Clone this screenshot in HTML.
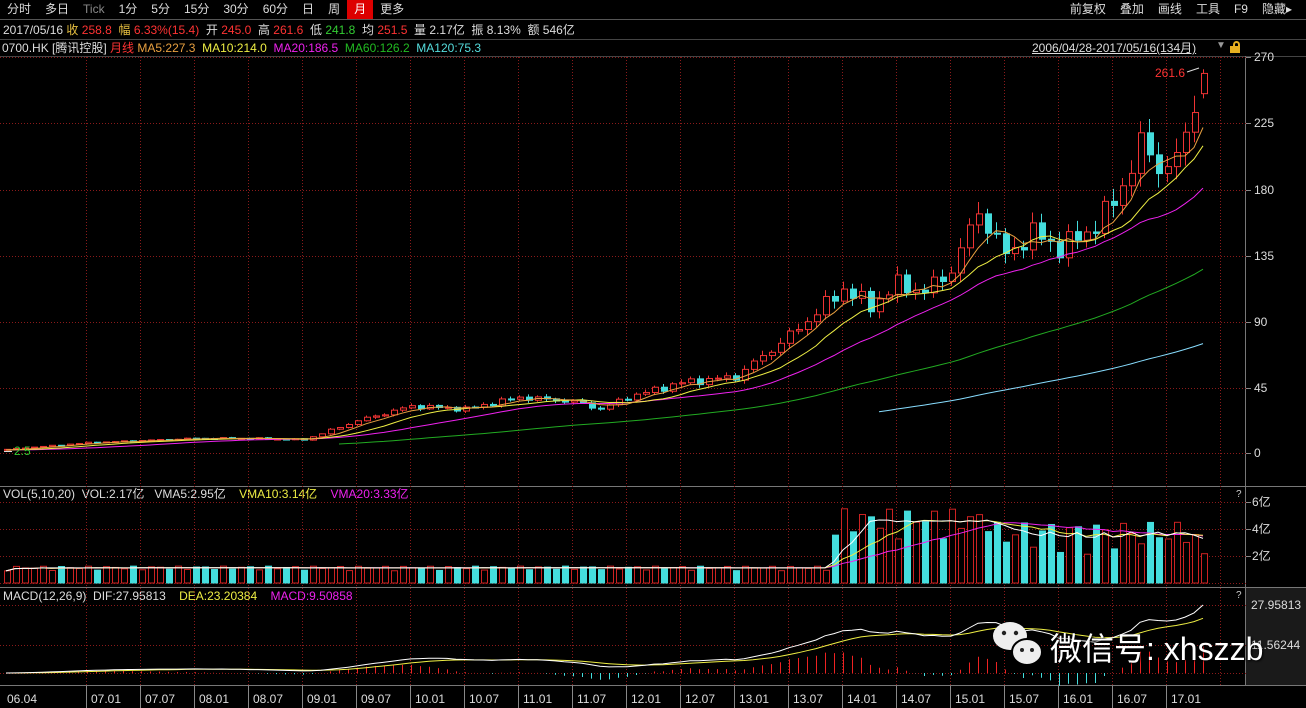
<!DOCTYPE html>
<html><head><meta charset="utf-8"><style>
*{margin:0;padding:0;box-sizing:border-box}
body{width:1306px;height:708px;background:#000;overflow:hidden;font-family:"Liberation Sans","Noto Sans CJK SC",sans-serif;font-size:12px;color:#ccc;position:relative}
.a{position:absolute;white-space:nowrap}
.nav span{display:inline-block;padding:0 7px;line-height:19px;color:#ddd}
svg{position:absolute;left:0;top:0}
</style></head><body>
<div class="a nav" style="left:0;top:0;height:20px;width:1306px;border-bottom:1px solid #555">
<span>分时</span><span>多日</span><span style="color:#888">Tick</span><span>1分</span><span>5分</span><span>15分</span><span>30分</span><span>60分</span><span>日</span><span>周</span><span style="background:#d00;color:#fff">月</span><span>更多</span>
</div>
<div class="a nav" style="right:0;top:0"><span>前复权</span><span>叠加</span><span>画线</span><span>工具</span><span>F9</span><span style="padding-right:14px">隐藏▸</span></div>
<div class="a" style="left:3px;top:21px;line-height:18px;color:#ddd">2017/05/16 <span style="color:#e8c040">收</span> <span style="color:#f33">258.8</span>&nbsp; <span style="color:#e8c040">幅</span> <span style="color:#f33">6.33%(15.4)</span>&nbsp; 开 <span style="color:#f33">245.0</span>&nbsp; 高 <span style="color:#f33">261.6</span>&nbsp; 低 <span style="color:#3c3">241.8</span>&nbsp; 均 <span style="color:#f33">251.5</span>&nbsp; 量 2.17亿&nbsp; 振 8.13%&nbsp; 额 546亿</div>
<div class="a" style="left:0;top:39px;width:1306px;border-top:1px solid #444"></div>
<div class="a" style="left:2px;top:40px;line-height:16px;color:#ddd">0700.HK [腾讯控股] <span style="color:#f33">月线</span> <span style="color:#e8a040">MA5:227.3</span>&nbsp; <span style="color:#ee4">MA10:214.0</span>&nbsp; <span style="color:#e2e">MA20:186.5</span>&nbsp; <span style="color:#2b2">MA60:126.2</span>&nbsp; <span style="color:#5dd">MA120:75.3</span></div>
<div class="a" style="left:1032px;top:40px;line-height:16px;color:#ddd;text-decoration:underline">2006/04/28-2017/05/16(134月)</div>
<div class="a" style="left:1216px;top:40px;color:#999;font-size:10px">▼</div>
<div class="a" style="left:1230px;top:46px;width:10px;height:7px;background:#e8b020"></div>
<div class="a" style="left:1233px;top:41px;width:7px;height:7px;border:2px solid #e8b020;border-bottom:none;border-radius:4px 4px 0 0"></div>
<div class="a" style="left:3px;top:487px;line-height:14px;color:#ddd">VOL(5,10,20)&nbsp; VOL:2.17亿&nbsp;&nbsp; VMA5:2.95亿&nbsp;&nbsp;&nbsp; <span style="color:#ee4">VMA10:3.14亿</span>&nbsp;&nbsp;&nbsp; <span style="color:#e2e">VMA20:3.33亿</span></div>
<div class="a" style="left:3px;top:589px;line-height:14px;color:#ddd">MACD(12,26,9)&nbsp; DIF:27.95813&nbsp;&nbsp;&nbsp; <span style="color:#ee4">DEA:23.20384</span>&nbsp;&nbsp;&nbsp; <span style="color:#e2e">MACD:9.50858</span></div>
<svg id="s" width="1306" height="708"></svg>
<div class="a" style="left:1050px;top:624px;font-size:32px;color:#fff;text-shadow:1px 1px 2px #000">微信号: xhszzb</div>
<script>
var s=document.getElementById('s'),h='';
function L(x1,y1,x2,y2,c,d){h+='<line x1="'+x1+'" y1="'+y1+'" x2="'+x2+'" y2="'+y2+'" stroke="'+c+'"'+(d?' stroke-dasharray="1 2"':'')+'/>';}
function T(x,y,t,c,f){h+='<text x="'+x+'" y="'+y+'" fill="'+c+'" font-size="'+(f||12)+'" font-family="Liberation Sans,Noto Sans CJK SC,sans-serif">'+t+'</text>';}
h+='<rect x="1246" y="588" width="60" height="97" fill="#1a1a1a"/>';
L(0,56.5,1306,56.5,'#444');L(1245.5,56,1245.5,685,'#777');
L(0,486.5,1306,486.5,'#777');L(0,587.5,1306,587.5,'#777');L(0,685.5,1306,685.5,'#777');
var gr='#8a1a1a';
for(var gx=86;gx<1246;gx+=54){L(gx+.5,57,gx+.5,685,gr,1);}
var ys=[57,123,190,256,322,388,453],lab=['270','225','180','135','90','45','0'];
for(var i=0;i<7;i++){L(0,ys[i]+.5,1246,ys[i]+.5,gr,1);L(1246,ys[i]+.5,1251,ys[i]+.5,'#888');T(1254,ys[i]+4,lab[i],'#ddd');}
[[502,'6亿'],[529,'4亿'],[556,'2亿']].forEach(function(v){L(0,v[0]+.5,1246,v[0]+.5,gr,1);L(1246,v[0]+.5,1251,v[0]+.5,'#888');T(1252,v[0]+4,v[1],'#ddd');});
L(0,583.5,1246,583.5,gr,1);
[605,645,673].forEach(function(y){L(0,y+.5,1246,y+.5,gr,1);});
T(1251,609,'27.95813','#ddd');T(1251,649,'11.56244','#ddd');
T(1236,497,'?','#ccc',10);T(1236,598,'?','#ccc',10);
var K=[[0,2.5],[9,7],[21,10],[27,10],[33,9],[39,22],[45,32],[51,30],[57,38],[63,35],[66,30],[69,38],[75,48],[81,52],[87,80],[93,112],[96,100],[99,115],[102,110],[105,125],[108,165],[111,135],[114,150],[117,140],[120,150],[123,170],[126,210],[128,195],[130,200],[131,215],[132,242],[133,258.8]];
var C=[];for(var k=0;k<K.length-1;k++){var a=K[k],b=K[k+1];for(var j=a[0];j<b[0];j++){C[j]=a[1]+(b[1]-a[1])*(j-a[0])/(b[0]-a[0]);}}C[133]=258.8;
for(var i=1;i<133;i++)C[i]*=1+0.06*Math.sin(i*2.3)*Math.sin(i*0.7+1);
function Y(p){return 453-p*1.4667;}function X(i){return 6+9*i;}
function MA(n,st){var r=[];for(var i=0;i<134;i++){var sm=0;for(var j=i-n+1;j<=i;j++)sm+=(j<0?2:C[j]);r[i]=sm/n;}return r;}
function poly(arr,st,c,fy){var p='';for(var i=st;i<134;i++)p+=X(i)+','+fy(arr[i]).toFixed(1)+' ';h+='<polyline points="'+p+'" fill="none" stroke="'+c+'"/>';}
for(var i=0;i<134;i++){var o=i?C[i-1]:2.3,c=C[i],hi=Math.max(o,c)*(1+0.02+0.03*Math.abs(Math.sin(i*1.7))),lo=Math.min(o,c)*(1-0.02-0.03*Math.abs(Math.cos(i*1.3)));if(i==133){o=245;hi=261.6;lo=241.8;}
var x=X(i),up=c>=o,col=up?'#e33':'#4dd';L(x+.5,Y(hi),x+.5,Y(lo),col);
var t=Y(Math.max(o,c)),bh=Math.max(1,Math.abs(Y(o)-Y(c)));
h+='<rect x="'+(x-2)+'.5" y="'+t+'" width="6" height="'+bh+'" fill="'+(up?'#000':'#4dd')+'" stroke="'+col+'"/>';}
poly(MA(120),97,'#8df',Y);poly(MA(60),37,'#2a2',Y);poly(MA(20),0,'#e2e',Y);poly(MA(10),0,'#ee4',Y);poly(MA(5),0,'#e8a040',Y);
T(1155,77,'261.6','#f33');L(1187,72,1199,68,'#ddd');
T(14,455,'2.5','#3c3');L(4,451.5,12,451.5,'#ddd');
var V=[];for(var i=0;i<134;i++){var base=i<92?0.9+0.35*Math.abs(Math.sin(i*1.9)):(i<110?3+2.5*Math.abs(Math.sin(i*1.3)):2+2.5*Math.abs(Math.sin(i*1.1)));V[i]=base;}
V[133]=2.17;
function VY(v){return 583-v*13.5;}
for(var i=0;i<134;i++){var up=!i||C[i]>=C[i-1],x=X(i);h+='<rect x="'+(x-2)+'.5" y="'+VY(V[i])+'" width="6" height="'+(V[i]*13.5)+'" fill="'+(up?'#000':'#4dd')+'" stroke="'+(up?'#c22':'#4dd')+'"/>';}
function VM(n){var r=[];for(var i=0;i<134;i++){var sm=0,c=0;for(var j=Math.max(0,i-n+1);j<=i;j++){sm+=V[j];c++;}r[i]=sm/c;}return r;}
poly(VM(20),0,'#e2e',VY);poly(VM(10),0,'#ee4',VY);poly(VM(5),0,'#fff',VY);
var e12=C[0],e26=C[0],dea=0,D=[],E=[];for(var i=0;i<134;i++){e12=e12*11/13+C[i]*2/13;e26=e26*25/27+C[i]*2/27;var d=e12-e26;dea=dea*0.8+d*0.2;D[i]=d;E[i]=dea;}
function MY(v){return 673-v*(68/D[133]);}
for(var i=0;i<134;i++){var m=2*(D[i]-E[i]);L(X(i)+.5,673,X(i)+.5,MY(m).toFixed(1),m>=0?'#e22':'#4dd');}
poly(E,0,'#ee4',MY);poly(D,0,'#fff',MY);
var tl=['06.04','07.01','07.07','08.01','08.07','09.01','09.07','10.01','10.07','11.01','11.07','12.01','12.07','13.01','13.07','14.01','14.07','15.01','15.07','16.01','16.07','17.01'];
for(var i=0;i<tl.length;i++){var x=i?86+54*(i-1):2;if(i)L(x+.5,686,x+.5,708,'#888');T(x+5,703,tl[i],'#ddd');}
h+='<ellipse cx="1010" cy="636" rx="17" ry="14" fill="#eee"/><ellipse cx="1027" cy="652" rx="15" ry="13" fill="#eee" stroke="#000" stroke-width="2"/>';
h+='<circle cx="1004" cy="633" r="2.2" fill="#222"/><circle cx="1016" cy="633" r="2.2" fill="#222"/><circle cx="1022" cy="650" r="2" fill="#222"/><circle cx="1032" cy="650" r="2" fill="#222"/>';
s.innerHTML=h;
</script>
</body></html>
